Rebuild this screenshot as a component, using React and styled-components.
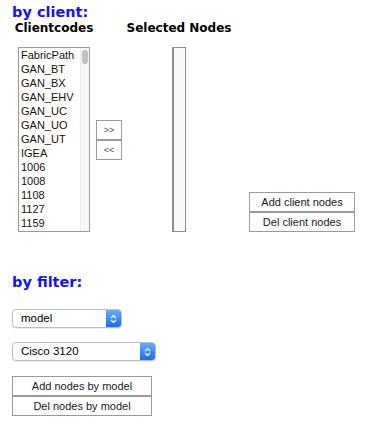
import React from 'react';
import styled, { createGlobalStyle } from 'styled-components';

const GlobalStyle = createGlobalStyle`
  body {
    margin: 0;
    background: #fff;
    font-family: "Liberation Sans", Arial, sans-serif;
  }
`;

const Page = styled.div`
  padding: 3px 0 0 12px;
`;

const Heading = styled.h2`
  margin: ${(p) => (p.$top ? `${p.$top}px` : 0)} 0 0 0;
  font-family: "DejaVu Sans", Verdana, sans-serif;
  font-size: 14.5px;
  line-height: 18px;
  font-weight: bold;
  color: #1414f5;
`;

const ClientGrid = styled.div`
  display: grid;
  grid-template-columns: 84px 26px 114px 119px;
  grid-template-rows: 14px 185px;
  row-gap: 12px;
`;

const ColHead = styled.div`
  grid-row: 1;
  grid-column: ${(p) => p.$col};
  font-family: "DejaVu Sans", Verdana, sans-serif;
  font-size: 12px;
  line-height: 14px;
  font-weight: bold;
  color: #000;
  text-align: center;
  white-space: nowrap;
`;

const ListBox = styled.div`
  grid-row: 2;
  grid-column: 1;
  justify-self: center;
  width: 72px;
  height: 185px;
  box-sizing: border-box;
  border: 1px solid #9a9a9a;
  background: #fff;
  display: flex;
  overflow: hidden;
`;

const Options = styled.div`
  flex: 1;
  padding-left: 2px;
`;

const Option = styled.div`
  font-size: 11px;
  line-height: 14px;
  height: 14px;
  color: #1a1208;
  white-space: nowrap;
`;

const ScrollTrack = styled.div`
  width: 9px;
  background: #f7f7f7;
  border-left: 1px solid #ececec;
  padding: 2px 1px;
  box-sizing: border-box;
`;

const Thumb = styled.div`
  width: 6px;
  height: 14px;
  border-radius: 3px;
  background: #c2c2c2;
`;

const MoveButtons = styled.div`
  grid-row: 2;
  grid-column: 2;
  align-self: center;
  display: flex;
  flex-direction: column;
`;

const Button = styled.button`
  box-sizing: border-box;
  width: ${(p) => p.$w}px;
  height: 20px;
  margin: 0;
  padding: 0;
  border: 1px solid #9a9a9a;
  background: #fff;
  color: ${(p) => (p.$small ? '#4a4a4a' : '#1a1a1a')};
  font-family: "Liberation Sans", Arial, sans-serif;
  font-size: ${(p) => (p.$small ? 9 : 11)}px;
  line-height: 18px;
  text-align: center;
  white-space: nowrap;
`;

const SelectedBox = styled.div`
  grid-row: 2;
  grid-column: 3;
  justify-self: center;
  width: 14px;
  height: 185px;
  box-sizing: border-box;
  border: 1px solid #8e8e8e;
  border-left-width: 2px;
  background: #f8f8f8;
`;

const ActionStack = styled.div`
  grid-row: 2;
  grid-column: 4;
  align-self: end;
  justify-self: end;
  display: flex;
  flex-direction: column;
`;

const FilterSection = styled.div`
  display: flex;
  flex-direction: column;
  align-items: flex-start;
`;

const Select = styled.div`
  box-sizing: border-box;
  width: ${(p) => p.$w}px;
  height: 19px;
  margin-top: ${(p) => p.$top}px;
  border: 1px solid #bdbdbd;
  border-radius: 4px;
  box-shadow: 0 1px 1px rgba(0, 0, 0, 0.08);
  background: #fff;
  display: flex;
  align-items: stretch;
  overflow: hidden;
`;

const SelectText = styled.div`
  flex: 1;
  padding-left: 8px;
  font-size: 11.5px;
  line-height: 17px;
  color: #000;
`;

const Stepper = styled.div`
  width: 15px;
  background: linear-gradient(#6aabfb, #1c6cf0);
  display: flex;
  align-items: center;
  justify-content: center;
`;

const Actions = styled.div`
  margin-top: 15px;
  display: flex;
  flex-direction: column;
`;

const clientCodes = [
  'FabricPath', 'GAN_BT', 'GAN_BX', 'GAN_EHV', 'GAN_UC', 'GAN_UO', 'GAN_UT',
  'IGEA', '1006', '1008', '1108', '1127', '1159',
];

const Arrows = () => (
  <svg width="7" height="10" viewBox="0 0 7 10">
    <path d="M1 4 L3.5 1.5 L6 4 M1 6 L3.5 8.5 L6 6" fill="none" stroke="#fff" strokeWidth="1.2" />
  </svg>
);

const Dropdown = ({ width, top, value }) => (
  <Select $w={width} $top={top}>
    <SelectText>{value}</SelectText>
    <Stepper>
      <Arrows />
    </Stepper>
  </Select>
);

const App = () => (
  <Page>
    <GlobalStyle />
    <Heading>by client:</Heading>
    <ClientGrid>
      <ColHead $col={1}>Clientcodes</ColHead>
      <ColHead $col={3}>Selected Nodes</ColHead>
      <ListBox>
        <Options>
          {clientCodes.map((c) => (
            <Option key={c}>{c}</Option>
          ))}
        </Options>
        <ScrollTrack>
          <Thumb />
        </ScrollTrack>
      </ListBox>
      <MoveButtons>
        <Button $w={26} $small>&gt;&gt;</Button>
        <Button $w={26} $small>&lt;&lt;</Button>
      </MoveButtons>
      <SelectedBox />
      <ActionStack>
        <Button $w={106}>Add client nodes</Button>
        <Button $w={106}>Del client nodes</Button>
      </ActionStack>
    </ClientGrid>

    <Heading $top={41}>by filter:</Heading>
    <FilterSection>
      <Dropdown width={110} top={18} value="model" />
      <Dropdown width={144} top={14} value="Cisco 3120" />
      <Actions>
        <Button $w={140}>Add nodes by model</Button>
        <Button $w={140}>Del nodes by model</Button>
      </Actions>
    </FilterSection>
  </Page>
);

export default App;
